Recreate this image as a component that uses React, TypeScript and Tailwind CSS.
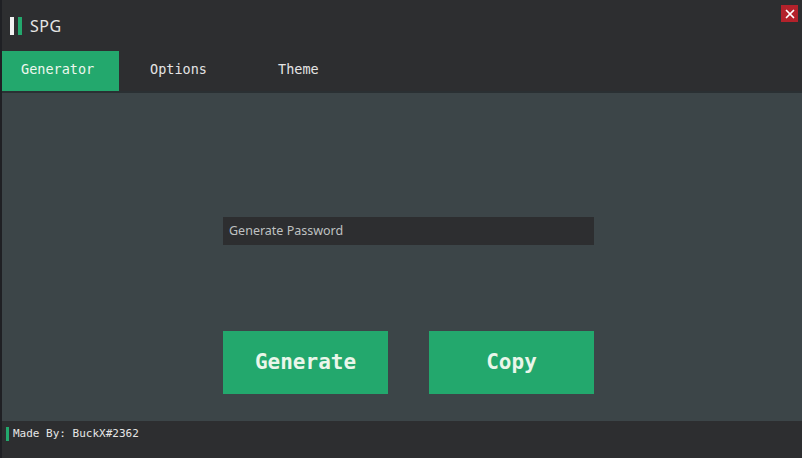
import { X } from 'lucide-react';

const mono = { fontFamily: '"DejaVu Sans Mono", "Liberation Mono", monospace' };

function Tab({ label, active, pad }: { label: string; active?: boolean; pad: string }): JSX.Element {
  return (
    <div
      className={`flex h-full w-[117px] items-center pb-[4px] text-[13.5px] ${pad} ${
        active ? 'bg-[#23a86d] text-[#eef7ee]' : 'text-[#e4e4e4]'
      }`}
      style={mono}
    >
      {label}
    </div>
  );
}

export default function App(): JSX.Element {
  return (
    <div className="flex h-[458px] w-[802px] flex-col border-l-2 border-[#1f2024] bg-[#2d2e30]">
      {/* title bar */}
      <div className="flex h-[51px] shrink-0 items-start">
        <div className="flex h-full items-center gap-[4px] pl-[8px]">
          <div className="h-[18px] w-[4px] bg-[#f2f2f2]" />
          <div className="h-[18px] w-[4px] bg-[#23a86d]" />
          <span
            className="ml-[4px] text-[16px] tracking-[0.5px] text-[#e6e6e6]"
            style={{ fontFamily: '"Noto Sans", "Open Sans", sans-serif' }}
          >
            SPG
          </span>
        </div>
        <button className="ml-auto mr-[4px] mt-[5px] flex h-[17px] w-[17px] items-center justify-center bg-[#b3222b] text-white">
          <X size={14} strokeWidth={3} />
        </button>
      </div>

      {/* tabs */}
      <div className="flex h-[40px] shrink-0">
        <Tab label="Generator" active pad="pl-[19px]" />
        <Tab label="Options" pad="pl-[31px]" />
        <Tab label="Theme" pad="pl-[42px]" />
      </div>
      <div className="h-[2px] shrink-0 bg-[#2a3033]" />

      {/* content */}
      <div className="flex h-[328px] shrink-0 flex-col bg-[#3c4548] pl-[221px] pt-[124px]">
        <div
          className="flex h-[28px] w-[371px] items-center bg-[#2d2e30] pl-[6px] text-[12.5px] text-[#bfc1c1]"
          style={{ fontFamily: '"Noto Sans", "Open Sans", sans-serif' }}
        >
          Generate Password
        </div>
        <div className="mt-[86px] flex gap-[41px]">
          <button
            className="flex h-[63px] w-[165px] items-center justify-center bg-[#23a86d] text-[21px] font-bold text-[#eaf6ea]"
            style={mono}
          >
            Generate
          </button>
          <button
            className="flex h-[63px] w-[165px] items-center justify-center bg-[#23a86d] text-[21px] font-bold text-[#eaf6ea]"
            style={mono}
          >
            Copy
          </button>
        </div>
      </div>

      {/* footer */}
      <div className="flex flex-1 items-start gap-[4px] pl-[4px] pt-[6px]">
        <div className="h-[14px] w-[3px] bg-[#23a86d]" />
        <span className="text-[11px] leading-[14px] text-[#e6e6e6]" style={mono}>
          Made By: BuckX#2362
        </span>
      </div>
    </div>
  );
}
